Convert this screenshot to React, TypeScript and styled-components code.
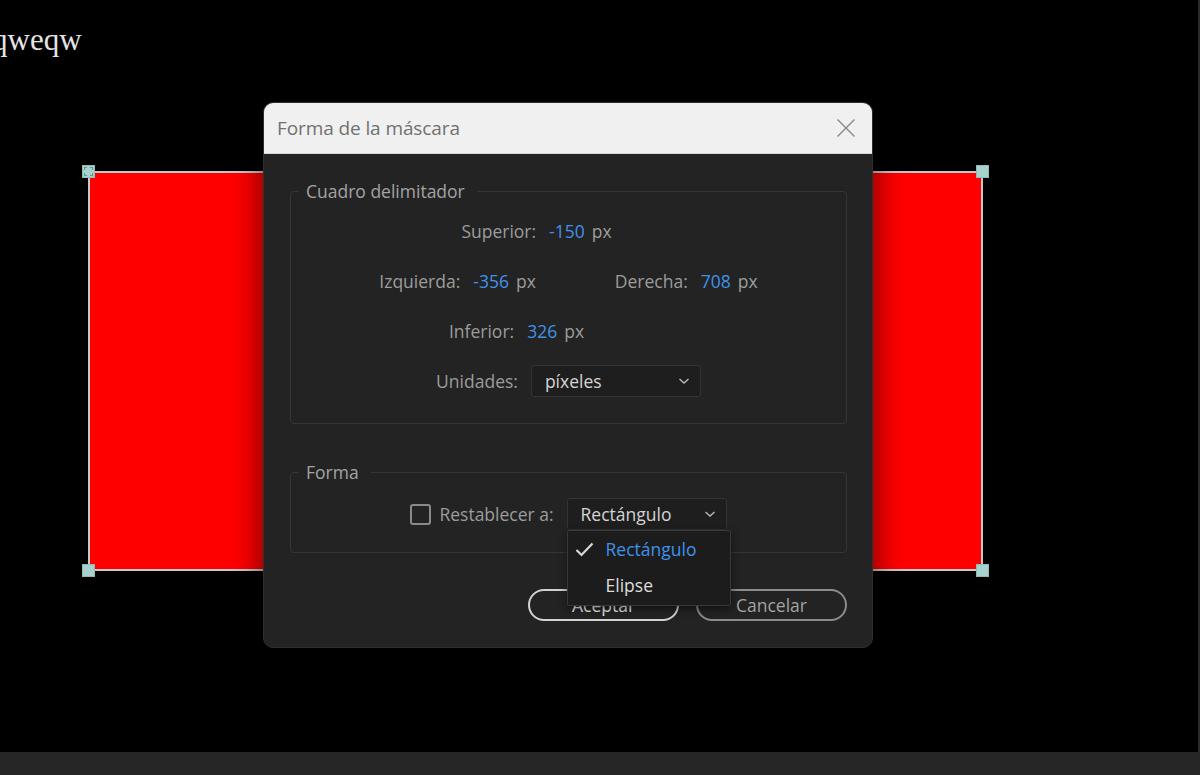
import React from "react";
import styled, { createGlobalStyle } from "styled-components";

const Global = createGlobalStyle`
  html, body { margin: 0; padding: 0; background: #000; }
  #root { width: 1200px; height: 775px; }
  * { box-sizing: border-box; }
`;

const UI_FONT = `"Open Sans", "Noto Sans", "Liberation Sans", sans-serif`;

const Page = styled.div`
  width: 1200px;
  height: 775px;
  display: flex;
  flex-direction: column;
  background: #000;
  overflow: hidden;
`;

const Canvas = styled.div`
  position: relative;
  flex: 1;
  background: #000;
  border-right: 2px solid #2a2a2a;
  overflow: hidden;
`;

const BottomBar = styled.div`
  height: 23px;
  background: #262626;
  flex: none;
`;

const CanvasText = styled.div`
  position: absolute;
  left: -8px;
  top: 24px;
  font-family: "Liberation Serif", "Times New Roman", serif;
  font-size: 31px;
  line-height: 1;
  color: #e4e4e4;
`;

const MaskRect = styled.div`
  position: absolute;
  left: 88px;
  top: 171px;
  width: 895px;
  height: 400px;
  background: #ff0000;
  border: 2px solid #c9c9c9;
`;

const Handle = styled.div<{ $x: "l" | "r"; $y: "t" | "b"; $dashed?: boolean }>`
  position: absolute;
  width: 13px;
  height: 13px;
  background: #a8d2ce;
  border: 1px solid #8fbab6;
  ${(p) => (p.$x === "l" ? "left: -8px;" : "right: -8px;")}
  ${(p) => (p.$y === "t" ? "top: -8px;" : "bottom: -8px;")}
  &::after {
    content: "";
    position: absolute;
    inset: 1px;
    border: 1px dashed ${(p) => (p.$dashed ? "#6f8f8c" : "transparent")};
  }
`;

const Dialog = styled.div`
  position: absolute;
  left: 263px;
  top: 102px;
  width: 610px;
  height: 546px;
  display: flex;
  flex-direction: column;
  border-radius: 10px;
  background: #232323;
  border: 1px solid #2f2f2f;
  box-shadow: 0 4px 30px 2px rgba(0, 0, 0, 0.55);
  font-family: ${UI_FONT};
`;

const TitleBar = styled.div`
  height: 51px;
  flex: none;
  display: flex;
  align-items: center;
  justify-content: space-between;
  padding: 0 15px 0 13px;
  background: #f0f0f0;
  border-radius: 9px 9px 0 0;
  border-bottom: 1px solid #d6d6d6;
`;

const Title = styled.div`
  font-size: 19px;
  color: #707070;
  letter-spacing: -0.1px;
`;

const CloseButton = styled.div`
  width: 22px;
  height: 22px;
  display: flex;
  align-items: center;
  justify-content: center;
`;

const Body = styled.div`
  flex: 1;
  display: flex;
  flex-direction: column;
  padding: 37px 25px 26px 26px;
`;

const Group = styled.div<{ $pt: number; $pb: number; $mt?: number }>`
  position: relative;
  border: 1px solid #363636;
  border-radius: 4px;
  margin-top: ${(p) => p.$mt ?? 0}px;
  padding: ${(p) => p.$pt}px 0 ${(p) => p.$pb}px;
  display: flex;
  flex-direction: column;
`;

const Legend = styled.div`
  position: absolute;
  left: 8px;
  top: -13px;
  padding: 0 12px 0 7px;
  background: #232323;
  font-size: 17.5px;
  line-height: 24px;
  color: #a3a3a3;
`;

const Row = styled.div<{ $shift?: number }>`
  height: 50px;
  display: flex;
  align-items: center;
  justify-content: center;
  padding-right: ${(p) => (p.$shift ? p.$shift * 2 : 0)}px;
  font-size: 17.5px;
`;

const Field = styled.div`
  display: flex;
  align-items: baseline;
`;

const Label = styled.span`
  color: #9c9c9c;
  margin-right: 13px;
`;

const Value = styled.span`
  color: #3f92ec;
  margin-right: 7px;
`;

const Unit = styled.span`
  color: #9c9c9c;
`;

const Spacer = styled.div<{ $w: number }>`
  width: ${(p) => p.$w}px;
`;

const SelectWrap = styled.div`
  position: relative;
`;

const Select = styled.div<{ $w: number }>`
  width: ${(p) => p.$w}px;
  height: 32px;
  display: flex;
  align-items: center;
  justify-content: space-between;
  padding: 0 10px 0 13px;
  background: #1e1e1e;
  border: 1px solid #343434;
  border-radius: 3px;
  color: #d4d4d4;
  font-size: 17.5px;
`;

const Checkbox = styled.div`
  width: 21px;
  height: 21px;
  border: 2px solid #8a8a8a;
  border-radius: 3px;
  margin-right: 8px;
`;

const Menu = styled.div`
  position: absolute;
  left: 0;
  top: 100%;
  width: 164px;
  z-index: 2;
  padding: 0 0 2px;
  background: #1c1c1c;
  border: 1px solid #383838;
  border-radius: 2px;
  box-shadow: 0 3px 8px rgba(0, 0, 0, 0.5);
`;

const MenuItem = styled.div<{ $active?: boolean }>`
  height: 36px;
  display: flex;
  align-items: center;
  padding-left: 7px;
  font-size: 17.5px;
  color: ${(p) => (p.$active ? "#3f92ec" : "#dcdcdc")};
`;

const CheckSlot = styled.div`
  width: 31px;
  display: flex;
  align-items: center;
`;

const ButtonRow = styled.div`
  margin-top: 36px;
  display: flex;
  justify-content: flex-end;
  gap: 17px;
`;

const Button = styled.div<{ $primary?: boolean }>`
  width: 151px;
  height: 32px;
  border-radius: 16px;
  border: 2px solid ${(p) => (p.$primary ? "#d2d2d2" : "#8c8c8c")};
  color: ${(p) => (p.$primary ? "#ececec" : "#a2a2a2")};
  font-size: 17.5px;
  display: flex;
  align-items: center;
  justify-content: center;
`;

const Chevron = () => (
  <svg width="12" height="8" viewBox="0 0 12 8">
    <polyline points="1.5,2 6,6 10.5,2" fill="none" stroke="#b8b8b8" strokeWidth="1.4" />
  </svg>
);

export default function App() {
  return (
    <>
      <Global />
      <Page>
        <Canvas>
          <CanvasText>qweqw</CanvasText>
          <MaskRect>
            <Handle $x="l" $y="t" $dashed />
            <Handle $x="r" $y="t" />
            <Handle $x="l" $y="b" />
            <Handle $x="r" $y="b" />
          </MaskRect>
          <Dialog>
            <TitleBar>
              <Title>Forma de la máscara</Title>
              <CloseButton>
                <svg width="20" height="20" viewBox="0 0 20 20">
                  <line x1="1.5" y1="1.5" x2="18.5" y2="18.5" stroke="#8a8a8a" strokeWidth="1.5" />
                  <line x1="18.5" y1="1.5" x2="1.5" y2="18.5" stroke="#8a8a8a" strokeWidth="1.5" />
                </svg>
              </CloseButton>
            </TitleBar>
            <Body>
              <Group $pt={14} $pb={17}>
                <Legend>Cuadro delimitador</Legend>
                <Row $shift={32}>
                  <Field>
                    <Label>Superior:</Label>
                    <Value>-150</Value>
                    <Unit>px</Unit>
                  </Field>
                </Row>
                <Row>
                  <Field>
                    <Label>Izquierda:</Label>
                    <Value>-356</Value>
                    <Unit>px</Unit>
                  </Field>
                  <Spacer $w={79} />
                  <Field>
                    <Label>Derecha:</Label>
                    <Value>708</Value>
                    <Unit>px</Unit>
                  </Field>
                </Row>
                <Row $shift={52}>
                  <Field>
                    <Label>Inferior:</Label>
                    <Value>326</Value>
                    <Unit>px</Unit>
                  </Field>
                </Row>
                <Row>
                  <Label>Unidades:</Label>
                  <Select $w={170}>
                    <span>píxeles</span>
                    <Chevron />
                  </Select>
                </Row>
              </Group>
              <Group $pt={16} $pb={13} $mt={48}>
                <Legend>Forma</Legend>
                <Row>
                  <Checkbox />
                  <Label>Restablecer a:</Label>
                  <SelectWrap>
                    <Select $w={160}>
                      <span>Rectángulo</span>
                      <Chevron />
                    </Select>
                    <Menu>
                      <MenuItem $active>
                        <CheckSlot>
                          <svg width="19" height="15" viewBox="0 0 19 15">
                            <polyline points="1.5,8 6.5,13 17.5,1.5" fill="none" stroke="#d8d8d8" strokeWidth="2.2" />
                          </svg>
                        </CheckSlot>
                        Rectángulo
                      </MenuItem>
                      <MenuItem>
                        <CheckSlot />
                        Elipse
                      </MenuItem>
                    </Menu>
                  </SelectWrap>
                </Row>
              </Group>
              <ButtonRow>
                <Button $primary>Aceptar</Button>
                <Button>Cancelar</Button>
              </ButtonRow>
            </Body>
          </Dialog>
        </Canvas>
        <BottomBar />
      </Page>
    </>
  );
}
